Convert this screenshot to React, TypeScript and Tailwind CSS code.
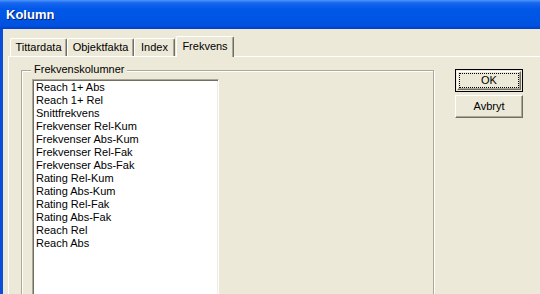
import React from 'react';

const items = [
  'Reach 1+ Abs',
  'Reach 1+ Rel',
  'Snittfrekvens',
  'Frekvenser Rel-Kum',
  'Frekvenser Abs-Kum',
  'Frekvenser Rel-Fak',
  'Frekvenser Abs-Fak',
  'Rating Rel-Kum',
  'Rating Abs-Kum',
  'Rating Rel-Fak',
  'Rating Abs-Fak',
  'Reach Rel',
  'Reach Abs',
];

const tabs = [
  { label: 'Tittardata', w: 'w-[57px]' },
  { label: 'Objektfakta', w: 'w-[67px]' },
  { label: 'Index', w: 'w-[41px]' },
];

export default function App() {
  return (
    <div className="w-[540px] h-[294px] overflow-hidden flex flex-col font-['Liberation_Sans',Arial,sans-serif] text-[11px] text-black">
      {/* Title bar */}
      <div className="h-[29px] shrink-0 flex items-center pl-[6px] bg-[linear-gradient(180deg,#4a97fa_0%,#1a66f0_10%,#0058e8_30%,#0054e3_70%,#0052df_88%,#003fcb_100%)]">
        <span className="text-[13px] font-bold text-white [text-shadow:1px_1px_0_#0a246a] pt-[1px]">Kolumn</span>
      </div>

      {/* Window body */}
      <div className="flex-1 flex flex-col bg-[#ece9d8] border-l-[3px] border-[#0b4fd8] pl-[5px] pt-[7px] min-h-0">
        {/* Tabs */}
        <div className="h-[20px] flex items-end pl-[2px] shrink-0">
          {tabs.map((t) => (
            <div
              key={t.label}
              className={`${t.w} h-[18px] flex items-center justify-center border-t border-l border-white border-r border-r-[#716f64] rounded-t-[2px] shadow-[inset_-1px_0_0_#aca899] bg-[#ece9d8]`}
            >
              {t.label}
            </div>
          ))}
          <div className="relative z-10 w-[58px] h-[21px] -mb-px ml-[1px] flex items-center justify-center pb-[2px] border-t border-l border-white border-r border-r-[#716f64] rounded-t-[2px] shadow-[inset_-1px_0_0_#aca899] bg-[#ece9d8]">
            Frekvens
          </div>
        </div>

        {/* Tab panel */}
        <div className="flex-1 flex border-t border-l border-white pl-[12px] pt-[13px] min-h-0">
          {/* Group box */}
          <div className="relative w-[413px] h-[300px] shrink-0 border border-[#aca899] shadow-[inset_1px_1px_0_#fff,1px_1px_0_#fff]">
            <span className="absolute left-[9px] -top-[8px] px-[3px] bg-[#ece9d8] leading-[13px]">Frekvenskolumner</span>
            <div className="ml-[10px] mt-[8px] w-[187px] h-[300px] bg-white border border-t-[#aca899] border-l-[#aca899] border-r-white border-b-white shadow-[inset_1px_1px_0_#716f64,inset_-1px_-1px_0_#f1efe2] pt-[1px] pl-[3px]">
              {items.map((it) => (
                <div key={it} className="h-[13px] leading-[13px] whitespace-nowrap">
                  {it}
                </div>
              ))}
            </div>
          </div>

          {/* Buttons */}
          <div className="ml-[21px] -mt-[1px] flex flex-col gap-[3px]">
            <div className="w-[68px] h-[23px] border border-black p-px">
              <div className="w-full h-full border border-t-white border-l-white border-r-[#716f64] border-b-[#716f64] shadow-[inset_-1px_-1px_0_#aca899] p-[1px]">
                <div className="w-full h-full border border-dotted border-black flex items-center justify-center">
                  OK
                </div>
              </div>
            </div>
            <div className="w-[68px] h-[23px] border border-t-white border-l-white border-r-[#716f64] border-b-[#716f64] shadow-[inset_-1px_-1px_0_#aca899] flex items-center justify-center">
              Avbryt
            </div>
          </div>
        </div>
      </div>
    </div>
  );
}
